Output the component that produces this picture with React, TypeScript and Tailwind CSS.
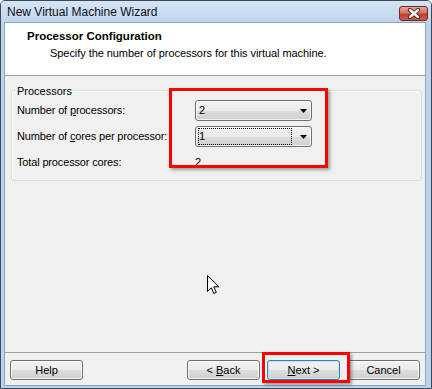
import React from "react";

const grad =
  "bg-[linear-gradient(#f2f2f2_0%,#ebebeb_50%,#dddddd_50%,#cfcfcf_100%)]";

function Combo({ value, focused }: { value: string; focused?: boolean }) {
  return (
    <div
      className={`w-[117px] h-[21px] border border-[#707070] rounded-[3px] ${grad} shadow-[inset_0_0_0_1px_rgba(255,255,255,0.75)] flex items-center pl-[2px]`}
    >
      <div
        className={`w-[94px] h-[17px] flex items-center border ${
          focused ? "border-dotted border-black" : "border-transparent"
        } text-[11px] leading-[13px] text-black`}
      >
        {value}
      </div>
      <div className="flex-1 flex justify-end pr-[4px]">
        <svg width="7" height="4" viewBox="0 0 7 4">
          <path d="M0 0H7L3.5 4Z" fill="#000" />
        </svg>
      </div>
    </div>
  );
}

function Btn({
  children,
  def,
}: {
  children: React.ReactNode;
  def?: boolean;
}) {
  return (
    <button
      className={`w-[73px] h-[20px] rounded-[3px] border ${
        def
          ? "border-[#3c7fb1] shadow-[inset_0_0_0_1px_#bfe4f8]"
          : "border-[#707070] shadow-[inset_0_0_0_1px_rgba(255,255,255,0.8)]"
      } ${grad} flex items-center justify-center text-[11px] leading-[13px] text-black`}
    >
      <span className="whitespace-pre">{children}</span>
    </button>
  );
}

export default function App() {
  return (
    <div className="w-[432px] h-[389px] relative bg-white font-['Liberation_Sans',Arial,sans-serif]">
      <div className="w-full h-full flex flex-col border border-[#3a4a5d] rounded-t-[5px] bg-[#bcd3ec] overflow-hidden">
        {/* title bar */}
        <div className="h-[21px] flex items-start bg-[linear-gradient(#d6e5f5,#bfd5ed)]">
          <span className="pl-[6px] pt-[4px] text-[12px] leading-[15px] text-[#111]">
            New Virtual Machine Wizard
          </span>
          <div className="ml-auto mt-[5px] mr-[3px] w-[29px] h-[15px] rounded-[3px] border border-[#6b2a25] bg-[linear-gradient(#e6a596_0%,#d4735f_45%,#c2412d_55%,#d05a42_100%)] flex items-center justify-center">
            <svg width="14" height="11" viewBox="0 0 14 11">
              <path
                d="M3 2L11 9M11 2L3 9"
                stroke="#4a1d18"
                strokeWidth="4.2"
                strokeLinecap="round"
              />
              <path
                d="M3 2L11 9M11 2L3 9"
                stroke="#ffffff"
                strokeWidth="2.4"
                strokeLinecap="round"
              />
            </svg>
          </div>
        </div>

        {/* client */}
        <div className="flex-1 flex flex-col ml-[3px] mr-[5px] mb-[2px] border border-[#8ea3bc] bg-[#f0f0f0]">
          {/* header */}
          <div className="h-[53px] bg-white border-b border-[#a0a0a0] pt-[7px] text-black">
            <div className="pl-[22px] text-[11.5px] leading-[13px] font-bold">
              Processor Configuration
            </div>
            <div className="pl-[45px] mt-[4px] text-[11px] leading-[13px] tracking-[-0.06px]">
              Specify the number of processors for this virtual machine.
            </div>
          </div>

          {/* body */}
          <div className="flex-1 flex flex-col">
            <div className="relative mt-[14px] ml-[6px] w-[411px] h-[91px] border border-[#d5dfe5] rounded-[3px] shadow-[inset_1px_1px_0_rgba(255,255,255,0.9)] pt-[9px] pl-[5px] text-[11px] leading-[13px] text-black">
              <span className="absolute top-[-6px] left-[4px] px-[1px] bg-[#f0f0f0]">
                Processors
              </span>
              <div className="flex items-center h-[21px]">
                <span className="w-[178px] tracking-[-0.15px]">
                  Number of <span className="underline">p</span>rocessors:
                </span>
                <Combo value="2" />
              </div>
              <div className="flex items-center h-[21px] mt-[5px]">
                <span className="w-[178px] tracking-[-0.15px]">
                  Number of <span className="underline">c</span>ores per
                  processor:
                </span>
                <Combo value="1" focused />
              </div>
              <div className="flex items-center mt-[9px]">
                <span className="w-[178px] tracking-[-0.15px]">
                  Total processor cores:
                </span>
                <span>2</span>
              </div>
            </div>

            <div className="flex-1" />

            {/* bottom buttons */}
            <div className="h-[33px] border-t border-[#a0a0a0] pt-[7px] px-[5px] flex items-start">
              <Btn>Help</Btn>
              <div className="flex-1" />
              <div className="flex gap-[7px]">
                <Btn>
                  {"< "}
                  <span className="underline">B</span>
                  {"ack"}
                </Btn>
                <Btn def>
                  <span className="underline">N</span>
                  {"ext >"}
                </Btn>
                <Btn>Cancel</Btn>
              </div>
            </div>
          </div>
        </div>
      </div>

      {/* annotation overlays */}
      <div className="absolute left-[169px] top-[88px] w-[159px] h-[80px] border-[3px] border-[#ff0000] shadow-[2px_2px_3px_rgba(0,0,0,0.35)]" />
      <div className="absolute left-[262px] top-[352px] w-[88px] h-[31px] border-[3px] border-[#ff0000] shadow-[2px_2px_3px_rgba(0,0,0,0.35)]" />

      {/* mouse cursor */}
      <svg
        className="absolute left-[206px] top-[274px]"
        width="14"
        height="21"
        viewBox="0 0 14 21"
      >
        <path
          d="M1.5 1.5V17.5L5.3 13.8L7.8 19.5L10.3 18.4L7.8 12.8H13Z"
          fill="#fff"
          stroke="#000"
          strokeWidth="1"
          strokeLinejoin="miter"
        />
      </svg>
    </div>
  );
}
